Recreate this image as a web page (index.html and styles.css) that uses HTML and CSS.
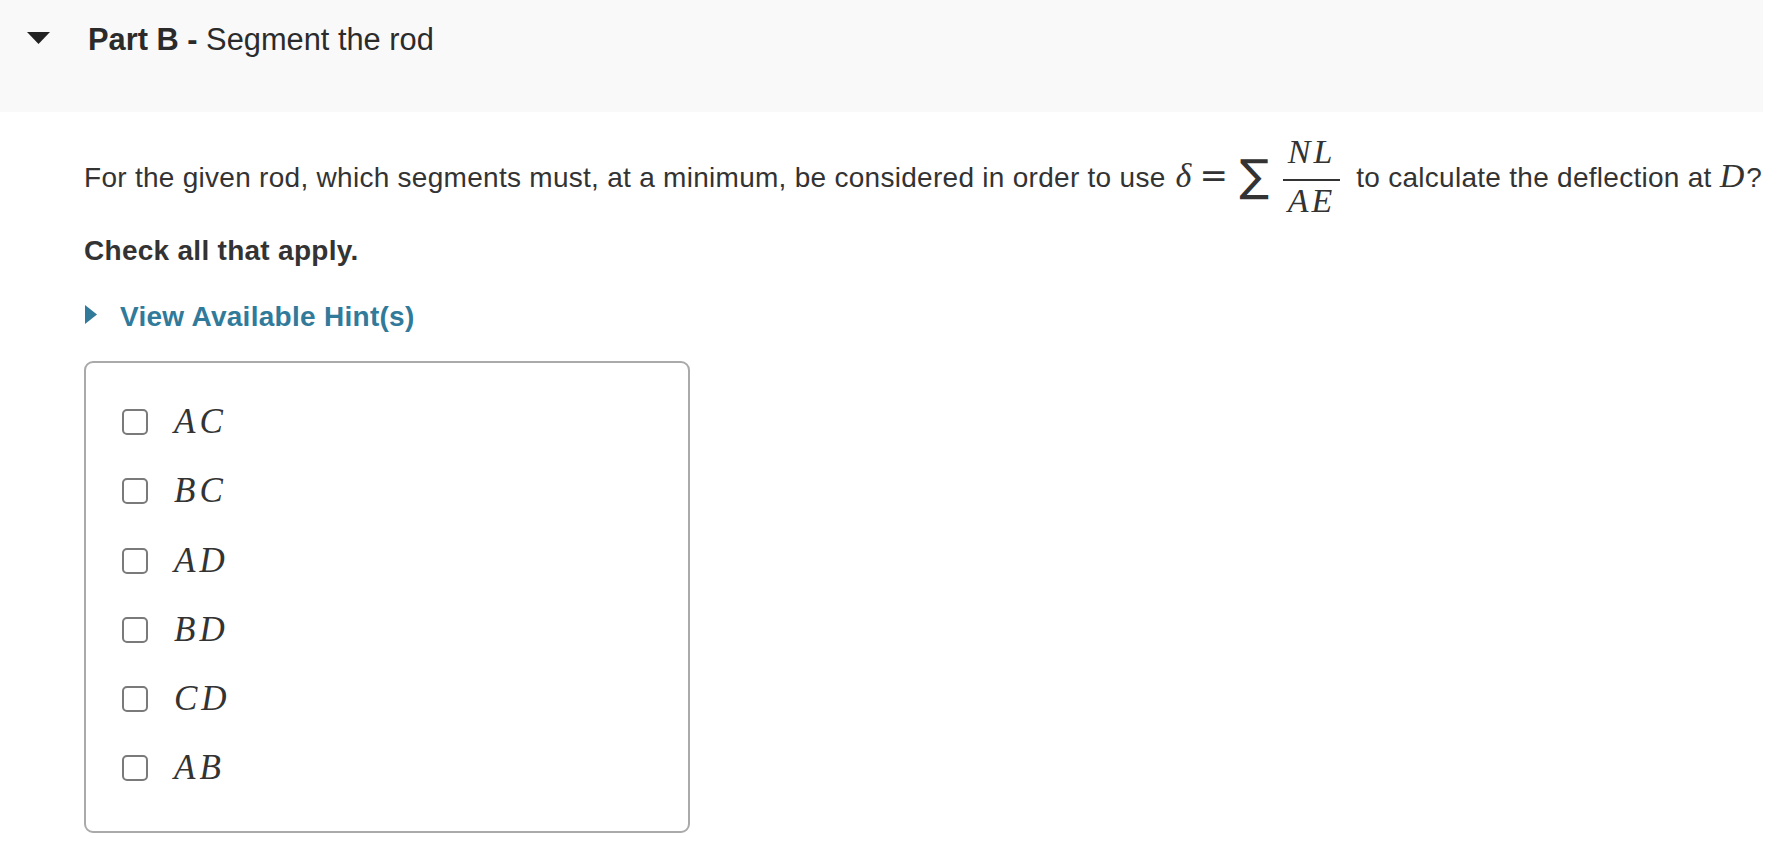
FILE: index.html
```html
<!DOCTYPE html>
<html lang="en">
<head>
<meta charset="utf-8">
<title>Part B - Segment the rod</title>
<link rel="stylesheet" href="styles.css">
</head>
<body>
<header class="part-header">
  <svg class="part-toggle" width="23" height="12" viewBox="0 0 23 12" aria-hidden="true"><polygon points="0,0 23,0 11.5,12" fill="#222"/></svg>
  <h2 class="part-title"><strong>Part B -</strong> Segment the rod</h2>
</header>
<main class="part-body">
  <p class="question">For the given rod, which segments must, at a minimum, be considered in order to use <span class="formula"><span class="mi delta">δ</span><span class="mo">=</span><span class="sum">∑</span><span class="frac"><span class="num mi">NL</span><span class="den mi">AE</span></span></span> to calculate the deflection at <span class="mi">D</span>?</p>
  <p class="instruction">Check all that apply.</p>
  <a class="hint-toggle" href="#">
    <svg class="hint-arrow" width="12" height="19" viewBox="0 0 12 19" aria-hidden="true"><polygon points="0,0 12,9.5 0,19" fill="#317a9a"/></svg>
    <span>View Available Hint(s)</span>
  </a>
  <div class="choices">
    <label class="choice"><input type="checkbox"><span class="mi">AC</span></label>
    <label class="choice"><input type="checkbox"><span class="mi">BC</span></label>
    <label class="choice"><input type="checkbox"><span class="mi">AD</span></label>
    <label class="choice"><input type="checkbox"><span class="mi">BD</span></label>
    <label class="choice"><input type="checkbox"><span class="mi">CD</span></label>
    <label class="choice"><input type="checkbox"><span class="mi">AB</span></label>
  </div>
</main>
</body>
</html>
```

FILE: styles.css
```css
html, body {
  margin: 0;
  padding: 0;
  background: #ffffff;
}

body {
  font-family: "Liberation Sans", Arial, sans-serif;
  color: #333333;
  font-size: 28px;
  overflow: hidden;
}

.part-header {
  box-sizing: border-box;
  width: 1763px;
  height: 112px;
  background: #f9f9f9;
  display: flex;
  align-items: flex-start;
  padding: 22px 0 0 27px;
}

.part-toggle {
  display: block;
  margin-top: 10px;
  flex: none;
}

.part-title {
  margin: 0 0 0 38px;
  font-size: 30.8px;
  line-height: 36px;
  font-weight: normal;
  color: #2b2b2b;
}

.part-title strong {
  font-weight: bold;
}

.part-body {
  padding-left: 84px;
  letter-spacing: 0.28px;
}

.question {
  margin: 23px 0 0 0;
  line-height: 32px;
  white-space: nowrap;
}

.mi {
  font-family: "Liberation Serif", "Times New Roman", serif;
  font-style: italic;
  font-size: 34px;
  letter-spacing: 2px;
}

.delta {
  margin-left: 2px;
}

.mo {
  font-family: "DejaVu Serif", serif;
  font-size: 34px;
  margin: 0 11px 0 6px;
}

.sum {
  font-family: "DejaVu Sans", "DejaVu Serif", serif;
  font-size: 44px;
  line-height: 32px;
  display: inline-block;
  vertical-align: -4px;
}

.frac {
  display: inline-flex;
  flex-direction: column;
  align-items: stretch;
  width: 57px;
  margin: 0 8px 0 14px;
  vertical-align: 24px;
  text-align: center;
}

.frac .num {
  line-height: 34px;
  padding-bottom: 10px;
  border-bottom: 2px solid #333333;
  letter-spacing: 3px;
}

.frac .den {
  line-height: 34px;
  padding-top: 3px;
  letter-spacing: 3px;
}

.instruction {
  margin: 17px 0 0 0;
  font-weight: bold;
  line-height: 32px;
}

.hint-toggle {
  display: flex;
  align-items: center;
  margin-top: 34px;
  color: #317a9a;
  font-weight: bold;
  line-height: 32px;
  text-decoration: none;
}

.hint-arrow {
  display: block;
  margin: 0 23px 0 1px;
  position: relative;
  top: -3px;
}

.choices {
  box-sizing: border-box;
  width: 606px;
  height: 472px;
  margin-top: 28px;
  border: 2px solid #aaaaaa;
  border-radius: 9px;
  padding: 46px 0 0 36px;
  display: flex;
  flex-direction: column;
  gap: 43.3px;
}

.choice {
  display: flex;
  align-items: center;
  height: 26px;
  gap: 26px;
}

.choice input {
  appearance: none;
  -webkit-appearance: none;
  box-sizing: border-box;
  width: 26px;
  height: 26px;
  margin: 0;
  border: 2px solid #7a7a7a;
  border-radius: 5px;
  background: #ffffff;
  flex: none;
}

.choice .mi {
  line-height: 26px;
  font-size: 35px;
  letter-spacing: 4px;
}
```
